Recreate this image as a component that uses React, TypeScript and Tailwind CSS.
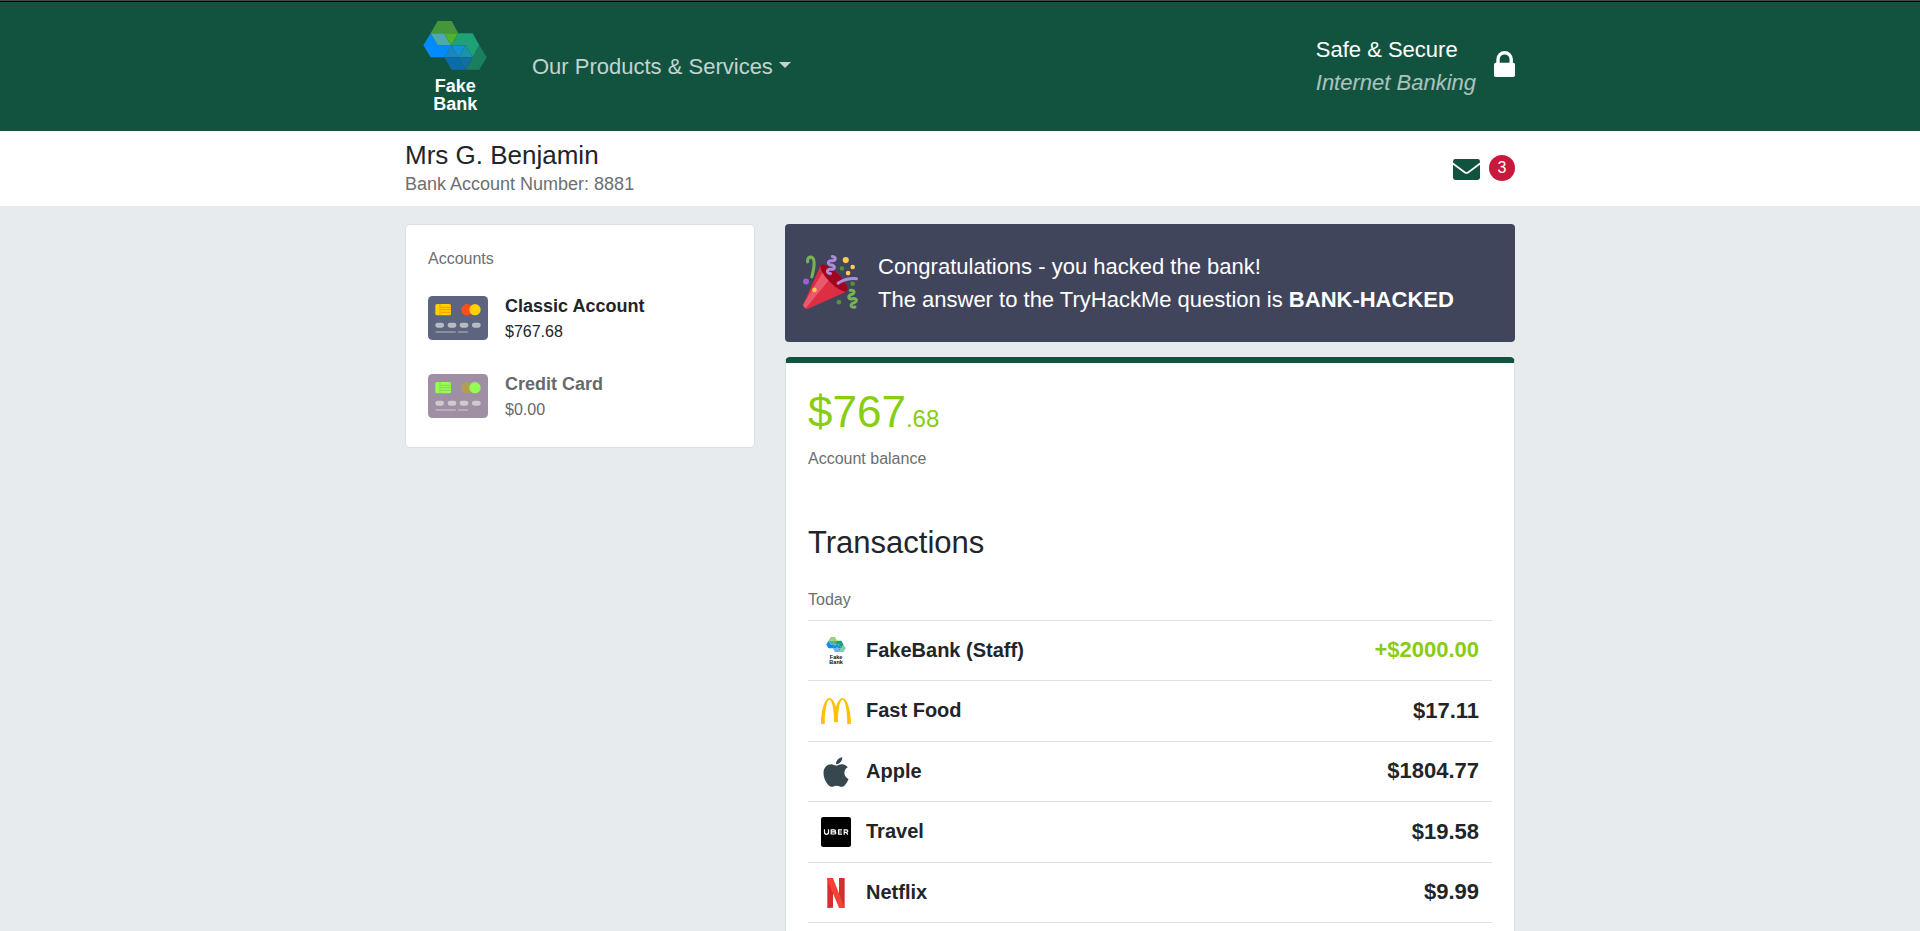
import React from "react";
import { FaApple } from "react-icons/fa";
import { SiMcdonalds } from "react-icons/si";

type LogoTone = {
  top: string;
  topBlue: string;
  topGreen: string;
  blue: string;
  green: string;
  midLeft: string;
  mid: string;
  midRight: string;
  lowLeft: string;
  lowRight: string;
  right: string;
  text: string;
};

const onDark: LogoTone = {
  top: "#45953b",
  topBlue: "#4da9aa",
  topGreen: "#52b12d",
  blue: "#008cff",
  green: "#1fa077",
  midLeft: "#1a86c0",
  mid: "#1490d4",
  midRight: "#1a94ad",
  lowLeft: "#0b6cab",
  lowRight: "#136f9f",
  right: "#1b7e60",
  text: "#ffffff",
};

const onLight: LogoTone = {
  top: "#98d27c",
  topBlue: "#4fae9c",
  topGreen: "#5cb531",
  blue: "#008cff",
  green: "#1fa077",
  midLeft: "#1a86d8",
  mid: "#1490d4",
  midRight: "#1a94ad",
  lowLeft: "#66b2f5",
  lowRight: "#58a8d8",
  right: "#80ccb4",
  text: "#111111",
};

function BankLogo({ tone, className }: { tone: LogoTone; className: string }) {
  return (
    <svg viewBox="69 63 192 273" className={className} role="img" aria-label="Fake Bank">
      <polygon fill={tone.top} points="113,63 155,63 175,100 92,100" />
      <polygon fill={tone.blue} points="92,100 113,136 153,136 155,136 133,172 92,172 70,136" />
      <polygon fill={tone.topBlue} points="92,100 133,100 153,136 113,136" />
      <polygon fill={tone.topGreen} points="133,100 175,100 153,136" />
      <polygon fill={tone.green} points="175,100 218,100 238,136 218,172 198,136 153,136" />
      <polygon fill={tone.midLeft} points="154,136 175,172 133,172" />
      <polygon fill={tone.mid} points="154,136 198,136 175,172" />
      <polygon fill={tone.midRight} points="198,136 218,172 175,172" />
      <polygon fill={tone.lowLeft} points="133,172 175,172 198,209 155,209" />
      <polygon fill={tone.lowRight} points="175,172 218,172 198,209" />
      <polygon fill={tone.right} points="238,136 260,172 238,209 198,209" />
      <g fill={tone.text} fontWeight="700" fontSize="54" textAnchor="middle">
        <text x="166" y="275">Fake</text>
        <text x="166" y="330">Bank</text>
      </g>
    </svg>
  );
}

function LockIcon() {
  return (
    <svg viewBox="0 0 21 26" className="mb-1 h-[26px] w-[21px]" aria-hidden="true">
      <path d="M4 13V8.3a6.6 6.6 0 0 1 13.2 0V13" fill="none" stroke="#fff" strokeWidth="3.4" />
      <rect y="11.8" width="21" height="14.2" rx="1.8" fill="#fff" />
    </svg>
  );
}

function EnvelopeIcon() {
  return (
    <svg viewBox="0 0 27 21" className="mt-1 h-[21px] w-[27px]" aria-hidden="true">
      <rect width="27" height="21" rx="2.4" fill="#125340" />
      <path
        d="M-0.5 4.2 11.6 13.3q1.9 1.4 3.8 0L27.5 4.2"
        fill="none"
        stroke="#fff"
        strokeWidth="1.7"
      />
    </svg>
  );
}

type CardTone = {
  body: string;
  chip: string;
  line: string;
  left: string;
  right: string;
  dot: string;
  rule: string;
};

const classicTone: CardTone = {
  body: "#5d647f",
  chip: "#ffd100",
  line: "#ff9500",
  left: "#ff4f19",
  right: "#ffd100",
  dot: "#b9bbc1",
  rule: "#8b8f9b",
};

const creditTone: CardTone = {
  body: "#9e8fa4",
  chip: "#93ff55",
  line: "#93d050",
  left: "#b29e50",
  right: "#93ff55",
  dot: "#cfc9d0",
  rule: "#b9aeb9",
};

function CardIcon({ tone }: { tone: CardTone }) {
  return (
    <svg viewBox="0 0 180 132" className="mb-0.5 h-11 w-[60px] shrink-0" aria-hidden="true">
      <rect width="180" height="132" rx="13" fill={tone.body} />
      <rect x="22" y="24" width="47" height="34" rx="5" fill={tone.chip} />
      <path d="M36 24V58M39 34H69M39 41H69M39 49H69" stroke={tone.line} strokeWidth="3" fill="none" />
      <circle cx="117" cy="41" r="17" fill={tone.left} />
      <circle cx="141" cy="41" r="17" fill={tone.right} />
      <rect x="22" y="80" width="26" height="15" rx="7" fill={tone.dot} />
      <rect x="59" y="80" width="26" height="15" rx="7" fill={tone.dot} />
      <rect x="95" y="80" width="26" height="15" rx="7" fill={tone.dot} />
      <rect x="132" y="80" width="26" height="15" rx="7" fill={tone.dot} />
      <rect x="22" y="105" width="62" height="6" rx="3" fill={tone.rule} />
      <rect x="89" y="105" width="32" height="6" rx="3" fill={tone.rule} />
    </svg>
  );
}

function PartyPopper() {
  return (
    <svg viewBox="0 0 36 36" className="mb-1 size-[55px] shrink-0" aria-hidden="true">
      <path fill="#DD2E44" d="M11.626 7.488c-.112.112-.197.247-.268.395l-.008-.008L.134 33.141l.011.011c-.208.403.14 1.223.853 1.937.713.713 1.533 1.061 1.936.853l.01.01L28.21 24.735l-.008-.009c.147-.07.282-.155.395-.269 1.562-1.562-.971-6.627-5.656-11.313-4.687-4.686-9.752-7.218-11.315-5.656z" />
      <path fill="#EA596E" d="M13 12L.416 32.506l-.282.635.011.011c-.208.403.14 1.223.853 1.937.232.232.473.408.709.557L17 17l-4-5z" />
      <path fill="#A0041E" d="M23.012 13.066c4.67 4.672 7.263 9.652 5.789 11.124-1.473 1.474-6.453-1.118-11.126-5.788-4.671-4.672-7.263-9.654-5.79-11.127 1.474-1.473 6.454 1.119 11.127 5.791z" />
      <path fill="#AA8DD8" d="M18.59 13.609c-.199.161-.459.245-.734.215-.868-.094-1.598-.396-2.109-.873-.541-.505-.808-1.183-.735-1.862.128-1.192 1.324-2.286 3.363-2.066.793.085 1.147-.17 1.159-.292.014-.121-.277-.446-1.07-.532-.868-.094-1.598-.396-2.11-.873-.541-.505-.809-1.183-.735-1.862.13-1.192 1.325-2.286 3.362-2.065.578.062.883-.057 1.012-.134.103-.063.144-.123.148-.158.012-.121-.275-.446-1.07-.532-.549-.06-.947-.552-.886-1.102.059-.549.55-.946 1.101-.886 2.037.219 2.973 1.542 2.844 2.735-.13 1.194-1.325 2.286-3.364 2.067-.578-.063-.88.057-1.01.134-.103.062-.145.123-.149.157-.013.122.276.446 1.071.532 2.037.22 2.973 1.542 2.844 2.735-.129 1.192-1.324 2.286-3.362 2.065-.578-.062-.882.058-1.012.134-.104.064-.144.124-.148.158-.013.121.276.446 1.07.532.548.06.947.553.886 1.102-.028.274-.167.511-.366.671z" />
      <path fill="#77B255" d="M30.661 22.857c1.973-.557 3.334.323 3.658 1.478.324 1.154-.378 2.615-2.35 3.17-.77.216-1.001.584-.97.701.034.118.425.312 1.193.095 1.972-.555 3.333.325 3.657 1.479.326 1.155-.378 2.614-2.351 3.17-.769.216-1.001.585-.967.702.033.117.423.311 1.192.095.53-.149 1.084.16 1.233.691.148.532-.161 1.084-.693 1.234-1.971.555-3.333-.323-3.659-1.479-.324-1.154.379-2.613 2.353-3.169.77-.217 1.001-.584.967-.702-.032-.117-.422-.312-1.19-.096-1.974.556-3.334-.322-3.659-1.479-.325-1.154.378-2.613 2.351-3.17.768-.215.999-.585.967-.701-.034-.118-.423-.312-1.192-.096-.532.15-1.083-.16-1.233-.691-.149-.53.161-1.082.693-1.232z" />
      <path fill="#AA8DD8" d="M23.001 20.16c-.294 0-.584-.129-.782-.375-.345-.432-.274-1.061.156-1.406.218-.175 5.418-4.259 12.767-3.208.547.078.927.584.849 1.131-.078.546-.58.93-1.132.848-6.493-.922-11.187 2.754-11.233 2.791-.186.148-.406.219-.625.219z" />
      <path fill="#77B255" d="M5.754 16c-.095 0-.192-.014-.288-.042-.529-.159-.829-.716-.67-1.245 1.133-3.773 2.16-9.794.898-11.364-.141-.178-.354-.353-.842-.316-.938.072-.849 2.051-.848 2.071.042.551-.372 1.031-.922 1.072-.559.034-1.031-.372-1.072-.923-.103-1.379.326-4.035 2.692-4.214 1.056-.08 1.933.287 2.552 1.057 2.371 2.951-.036 11.506-.542 13.192-.13.433-.528.712-.958.712z" />
      <g fill="#5C913B">
        <circle cx="25.5" cy="9.5" r="1.5" />
        <circle cx="32.5" cy="19.5" r="1.5" />
        <circle cx="23.5" cy="31.5" r="1.5" />
      </g>
      <circle fill="#9266CC" cx="2" cy="18" r="2" />
      <g fill="#FFCC4D">
        <circle cx="28" cy="4" r="2" />
        <circle cx="32.5" cy="8.5" r="1.5" />
        <circle cx="29.5" cy="12.5" r="1.5" />
        <circle cx="7.5" cy="23.5" r="1.5" />
      </g>
    </svg>
  );
}

function UberIcon() {
  return (
    <svg viewBox="0 0 90 90" className="size-[30px]" aria-hidden="true">
      <rect width="90" height="90" rx="7" fill="#000" />
      <g fill="none" stroke="#fff" strokeWidth="3.6">
        <path d="M10.5 37v9q0 6 6 6t6-6v-9" />
        <path d="M30.5 38.500h9q4 0 4 3t-4 3h-9h9.500q4.500 0 4.500 3.200t-4.500 3.300h-9.500z" />
        <path d="M63 38.500H52.500v13H63M52.500 45H62" />
        <path d="M69.500 53V38.500h7q4 0 4 3.700t-4 3.800h-7h6.500l4.500 7" />
      </g>
    </svg>
  );
}

function NetflixIcon() {
  return (
    <svg viewBox="0 0 54 90" className="h-[30px] w-[18px]" aria-hidden="true">
      <path fill="#d32f2f" d="M1 0H18V89L1 90zM36 0H53V90L36 89z" />
      <path fill="#f44336" d="M1 0H18L53 90Q44 88 36 89L1 6z" />
    </svg>
  );
}

const accounts = [
  { name: "Classic Account", amount: "$767.68", tone: classicTone, muted: false },
  { name: "Credit Card", amount: "$0.00", tone: creditTone, muted: true },
];

const transactions = [
  {
    name: "FakeBank (Staff)",
    amount: "+$2000.00",
    credit: true,
    icon: <BankLogo tone={onLight} className="h-7 w-5" />,
  },
  {
    name: "Fast Food",
    amount: "$17.11",
    credit: false,
    icon: <SiMcdonalds className="size-[30px] text-[#ffc107]" aria-hidden="true" />,
  },
  {
    name: "Apple",
    amount: "$1804.77",
    credit: false,
    icon: <FaApple className="size-[34px] shrink-0 text-[#37474f]" aria-hidden="true" />,
  },
  { name: "Travel", amount: "$19.58", credit: false, icon: <UberIcon /> },
  { name: "Netflix", amount: "$9.99", credit: false, icon: <NetflixIcon /> },
];

export default function App() {
  return (
    <div className="flex min-h-screen flex-col bg-[#e7ebee] font-['Liberation_Sans',Arial,sans-serif] text-[#212529]">
      <div className="border-t border-[#414549]">
        <header className="border-t border-black bg-[#125340]">
          <div className="mx-auto flex max-w-[1140px] items-center px-[15px] py-[19px]">
            <a href="#" className="ml-[18px]">
              <BankLogo tone={onDark} className="h-[91px] w-16 overflow-visible" />
            </a>
            <nav className="ml-[45px]">
              <button
                type="button"
                className="flex items-center gap-1.5 text-[22px] leading-[33px] text-white/75"
              >
                Our Products &amp; Services
                <span className="mb-1 border-x-[6px] border-t-[6px] border-x-transparent" />
              </button>
            </nav>
            <div className="mb-0.5 ml-auto flex items-center gap-[18px]">
              <p className="text-[22px] leading-[33px] text-white">
                Safe &amp; Secure
                <em className="block text-white/65">Internet Banking</em>
              </p>
              <LockIcon />
            </div>
          </div>
        </header>
      </div>

      <section className="bg-white">
        <div className="mx-auto flex max-w-[1140px] items-center justify-between px-[15px] py-2">
          <div>
            <h1 className="text-[26px] leading-8">Mrs G. Benjamin</h1>
            <p className="text-[18px] leading-[27px] text-[#6c6f72]">Bank Account Number: 8881</p>
          </div>
          <a href="#" aria-label="Messages" className="mb-0.5 flex items-center gap-[9px]">
            <EnvelopeIcon />
            <span className="flex size-[26px] items-center justify-center rounded-full bg-[#c8193c] text-base leading-6 text-white">
              3
            </span>
          </a>
        </div>
      </section>

      <main className="mx-auto grid w-full max-w-[1140px] flex-1 grid-cols-[350fr_730fr] gap-[30px] px-[15px] pt-[18px]">
        <aside className="self-start rounded-[5px] border border-[#dcdfe1] bg-white px-[22px] pt-[22px] pb-[25px]">
          <h2 className="text-base leading-6 text-[#6c6f72]">Accounts</h2>
          <ul className="mt-[22px] flex flex-col gap-[27px]">
            {accounts.map((account) => (
              <li
                key={account.name}
                className={account.muted ? "text-[#66696c]" : "text-[#212529]"}
              >
                <a href="#" className="flex items-center gap-[17px]">
                  <CardIcon tone={account.tone} />
                  <span>
                    <strong className="block text-[18px] leading-[27px]">{account.name}</strong>
                    <span className="block text-base leading-6">{account.amount}</span>
                  </span>
                </a>
              </li>
            ))}
          </ul>
        </aside>

        <div className="flex flex-col gap-[15px]">
          <section className="flex items-center gap-5 rounded bg-[#41455c] px-[18px] py-[26px] text-[22px] leading-[33px] text-white">
            <PartyPopper />
            <p>
              Congratulations - you hacked the bank!
              <br />
              The answer to the TryHackMe question is <strong>BANK-HACKED</strong>
            </p>
          </section>

          <section className="flex-1 rounded-t-[5px] border-x border-t-[6px] border-x-[#dcdfe1] border-t-[#125340] bg-white px-[22px] pt-[15px]">
            <p className="text-[44px] leading-[68px] text-[#88cc14]">
              $767<span className="text-2xl">.68</span>
            </p>
            <p className="mt-px text-base leading-6 text-[#6c6f72]">Account balance</p>

            <h2 className="mt-[54px] text-[31px] leading-9">Transactions</h2>
            <h3 className="mt-[27px] text-base leading-6 text-[#6c6f72]">Today</h3>
            <table
              aria-label="Transactions"
              className="mt-2 w-full border-separate border-spacing-0 border-b border-[#dee2e6]"
            >
              <tbody>
                {transactions.map((item) => (
                  <tr key={item.name} className="h-[60px] even:h-[61px]">
                    <td className="w-[58px] border-t border-[#dee2e6] pl-[13px]">
                      <span className="flex w-[30px] justify-center">{item.icon}</span>
                    </td>
                    <th
                      scope="row"
                      className="border-t border-[#dee2e6] pb-0.5 text-left text-xl font-bold"
                    >
                      {item.name}
                    </th>
                    <td
                      className={
                        item.credit
                          ? "border-t border-[#dee2e6] pr-[13px] pb-0.5 text-right text-[22px] font-bold text-[#88cc14]"
                          : "border-t border-[#dee2e6] pr-[13px] pb-0.5 text-right text-[22px] font-bold"
                      }
                    >
                      {item.amount}
                    </td>
                  </tr>
                ))}
              </tbody>
            </table>
          </section>
        </div>
      </main>
    </div>
  );
}
